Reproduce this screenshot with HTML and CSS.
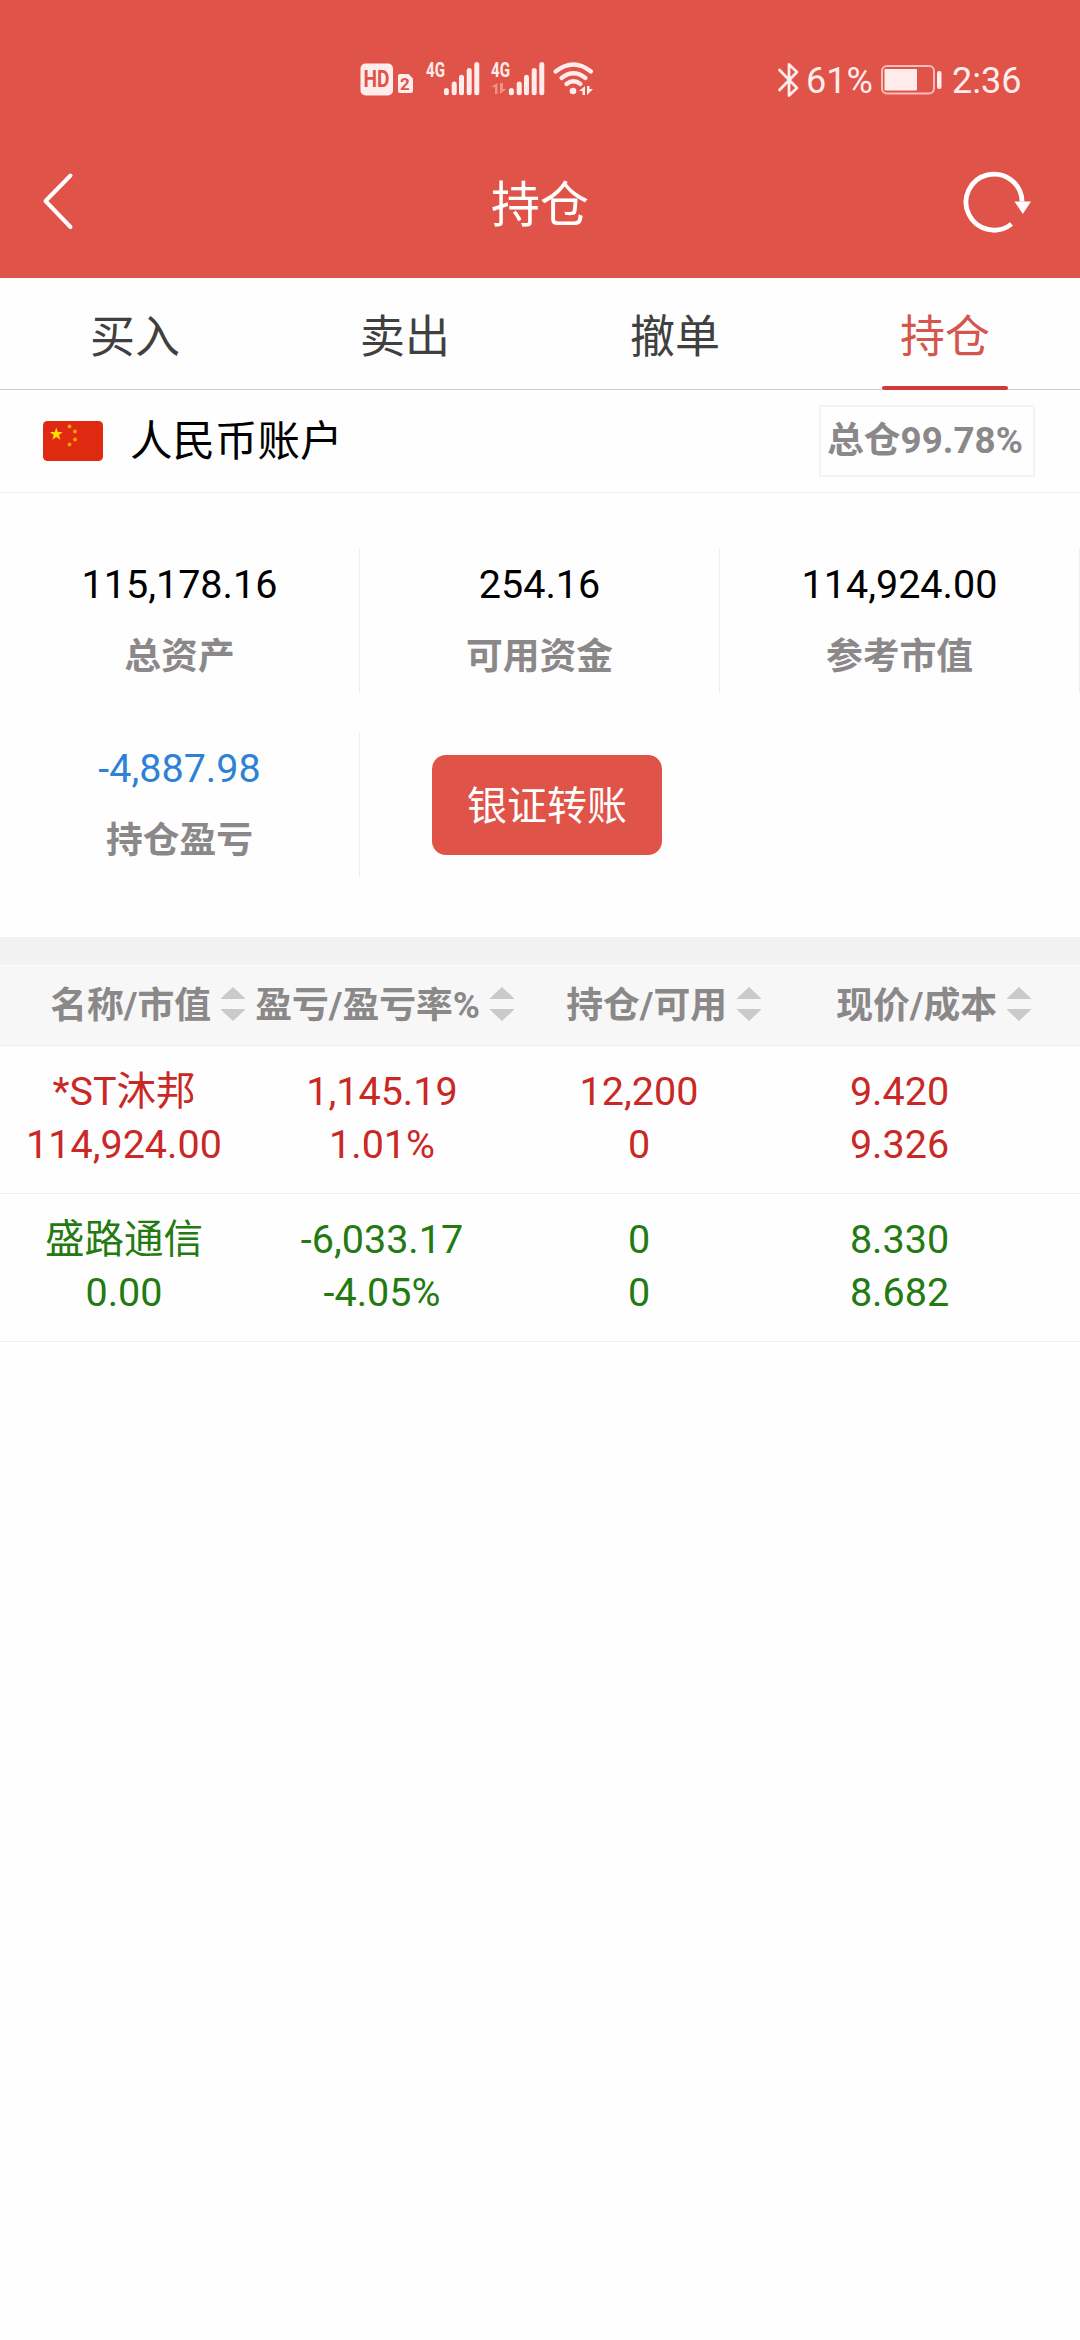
FILE: index.html
```html
<!DOCTYPE html>
<html lang="zh-CN">
<head>
<meta charset="utf-8">
<title>持仓</title>
<link rel="stylesheet" href="styles.css">
</head>
<body>
<header class="top">
  <div class="status">
    <svg class="status-signals" width="260" height="60" viewBox="0 0 260 60">
      <rect x="10.500" y="13.500" width="32.500" height="32" rx="5" fill="#ffeceb"/>
      <text class="hd" x="26.500" y="37" textLength="26" lengthAdjust="spacingAndGlyphs">HD</text>
      <path d="M50 24h8.500l4.500 4.500V41a2 2 0 0 1-2 2H50a2 2 0 0 1-2-2V26a2 2 0 0 1 2-2z" fill="#ffeceb"/>
      <text class="sim" x="55" y="39.500">2</text>
      <text class="net" x="76" y="27" textLength="19" lengthAdjust="spacingAndGlyphs">4G</text>
      <path class="bars" d="M96.400 40.500v2.200M104.200 34v8.700M111.500 27.200v15.500M119.200 20.500v22.200M126.800 14.500v28.200"/>
      <text class="net" x="141" y="27" textLength="19" lengthAdjust="spacingAndGlyphs">4G</text>
      <path d="M147.500 33v11h-2.500v-7h-4zM150 33v11l6.500-5h-3.500v-6z" fill="#f0918a"/>
      <path class="bars" d="M161.400 40.500v2.200M169.200 34v8.700M176.500 27.200v15.500M184.200 20.500v22.200M191.800 14.500v28.200"/>
      <path d="M205.500 21.500Q223.500 7.500 241 21.500M211.500 28Q223.500 18.500 235.500 28M216.500 34Q223.500 28.500 230.500 34" fill="none" stroke="#ffeceb" stroke-width="4.200" stroke-linecap="round"/>
      <circle cx="223" cy="41" r="3.300" fill="#ffeceb"/>
      <path d="M235 36v9h-2.500v-4h-3.500zM237 36v9l6-6h-3.500v-3z" fill="#ffeceb"/>
    </svg>
    <div class="status-right">
      <svg width="24" height="38" viewBox="0 0 24 38"><path d="M2.500 9L20 27 12 34.500V3.500L20 11 2.500 29" fill="none" stroke="#ffeceb" stroke-width="2.800" stroke-linejoin="round" stroke-linecap="round"/></svg>
      <span class="percent">61%</span>
      <svg class="battery" width="62" height="30" viewBox="0 0 62 30"><rect x="1" y="1" width="52" height="27.500" rx="5" fill="none" stroke="#f8bdb8" stroke-width="2"/><rect x="3.500" y="4" width="32.500" height="21.500" rx="1" fill="#ffeceb"/><rect x="56" y="6" width="4.500" height="18" rx="2.200" fill="#ffeceb"/></svg>
      <span class="clock">2:36</span>
    </div>
  </div>
  <div class="nav">
    <svg class="back" width="34" height="60" viewBox="0 0 34 60"><path d="M30.500 5.500L5.500 31 30.500 57" fill="none" stroke="#fff" stroke-width="4" stroke-linecap="round" stroke-linejoin="round"/></svg>
    <h1 class="title">持仓</h1>
    <svg class="refresh" width="70" height="64" viewBox="0 0 70 64"><path d="M49.500 54A28 28 0 1 1 60 31.500" fill="none" stroke="#fff" stroke-width="4.800"/><path d="M52.500 31.500h16.500L60.800 44z" fill="#fff"/></svg>
  </div>
</header>
<nav class="tabs">
  <span class="tab">买入</span>
  <span class="tab">卖出</span>
  <span class="tab">撤单</span>
  <span class="tab active">持仓</span>
</nav>
<section class="account">
  <svg class="flag" width="60" height="40" viewBox="0 0 60 40">
    <rect width="60" height="40" rx="4.500" fill="#df2910"/>
    <path d="M13.300 6.500l1.600 4.600h4.900l-3.900 2.900 1.500 4.700-4.100-2.800-4 2.800 1.400-4.700-3.900-2.900h4.900z" fill="#ffde00"/>
    <g fill="#f6a30a"><circle cx="26.500" cy="5.500" r="1.900"/><circle cx="32" cy="10.500" r="1.900"/><circle cx="32" cy="18.500" r="1.900"/><circle cx="26.500" cy="23.500" r="1.900"/></g>
  </svg>
  <span class="account-name">人民币账户</span>
  <span class="ratio">总仓99.78%</span>
</section>
<section class="summary">
  <div class="stat"><b>115,178.16</b><span>总资产</span></div>
  <div class="stat"><b>254.16</b><span>可用资金</span></div>
  <div class="stat"><b>114,924.00</b><span>参考市值</span></div>
  <div class="stat loss"><b>-4,887.98</b><span>持仓盈亏</span></div>
  <div class="action"><button class="transfer">银证转账</button></div>
</section>
<section class="holdings">
  <div class="head">
    <span class="col">名称/市值<i class="sort"></i></span>
    <span class="col">盈亏/盈亏率%<i class="sort"></i></span>
    <span class="col">持仓/可用<i class="sort"></i></span>
    <span class="col">现价/成本<i class="sort"></i></span>
  </div>
  <div class="row up">
    <div>*ST沐邦<br>114,924.00</div>
    <div>1,145.19<br>1.01%</div>
    <div>12,200<br>0</div>
    <div>9.420<br>9.326</div>
  </div>
  <div class="row down">
    <div>盛路通信<br>0.00</div>
    <div>-6,033.17<br>-4.05%</div>
    <div>0<br>0</div>
    <div>8.330<br>8.682</div>
  </div>
</section>
</body>
</html>
```
FILE: styles.css
```css
* { box-sizing: border-box; }
body {
  margin: 0;
  width: 1080px;
  min-height: 2340px;
  background: #fefefe;
  color: #000;
  font-family: Roboto, "Noto Sans CJK SC", sans-serif;
}
svg { display: block; flex: none; }

.top { height: 278px; background: #e05348; color: #fff; }
.status { display: flex; height: 110px; padding: 50px 59px 0 350px; justify-content: space-between; }
.status-right { display: flex; height: 60px; padding-top: 11px; color: #ffeceb; font-size: 36px; line-height: 41px; }
.percent { margin-left: 5px; width: 75px; }
.battery { margin-top: 4px; }
.clock { margin-left: 9px; width: 69px; }
.hd { font: 700 24px Roboto, sans-serif; text-anchor: middle; fill: #e05348; }
.sim { font: 700 17px Roboto, sans-serif; text-anchor: middle; fill: #e05348; }
.net { font: 700 20px Roboto, sans-serif; fill: #ffeceb; }
.bars { fill: none; stroke: #ffeceb; stroke-width: 5; stroke-linecap: round; }

.nav { display: flex; height: 168px; align-items: flex-start; justify-content: space-between; padding: 60px 48px 0 40px; }
.title { margin: 8px 0 0 44px; font-size: 49px; line-height: 56px; font-weight: 400; }

.tabs { display: flex; height: 112px; border-bottom: 1px solid #ccc; }
.tab { flex: 1; display: flex; justify-content: center; color: #404040; font-size: 45px; line-height: 120px; height: 112px; }
.active { color: #d4564d; }
.active::after { content: ""; align-self: flex-end; width: 126px; height: 4px; margin-left: -108px; margin-right: -18px; border-radius: 2px; background: #d03a3a; }

.account { display: flex; height: 103px; padding: 15px 45px 0 43px; border-bottom: 1px solid #f0f0f0; }
.flag { margin-top: 16px; }
.account-name { margin-left: 27px; font-size: 42.5px; line-height: 73px; }
.ratio { margin-left: auto; width: 216px; height: 72px; padding-left: 6px; border: 2px solid #f3f3f3; color: #8a8888; font-size: 36.8px; font-weight: 700; line-height: 67px; white-space: nowrap; }

.summary { display: grid; grid-template-columns: repeat(3, 360px); grid-auto-rows: 144px; row-gap: 40px; height: 444px; padding-top: 56px; }
.stat { border-right: 1px solid #efefef; text-align: center; }
.stat b, .stat span { display: block; }
.stat b { padding-top: 13px; font-size: 39.5px; font-weight: 400; line-height: 46px; }
.stat span { margin-top: 22px; color: #8a8888; font-size: 36.8px; font-weight: 700; line-height: 54px; }
.loss b { color: #2e82d6; }
.action { padding: 22px 0 0 72px; }
.transfer { display: block; width: 230px; height: 100px; padding: 3px 0 0; border: 0; border-radius: 14px; background: #e05348; color: #fff; font: inherit; font-size: 40px; line-height: 97px; }

.holdings { border-top: 28px solid #f2f2f2; padding-top: 1px; }
.head { display: grid; grid-template-columns: 245px 269px 247px 270px; height: 80px; border-bottom: 1px solid #f0f0f0; background: #f7f7f7; }
.col { display: flex; justify-content: flex-end; gap: 10px; color: #8a8888; font-size: 36.8px; font-weight: 700; line-height: 80px; white-space: nowrap; }
.sort { flex: none; width: 24px; height: 34px; margin-top: 21px; background: #cacaca; clip-path: polygon(50% 0, 100% 33%, 100% 35%, 0 35%, 0 33%, 50% 0, 0 65%, 100% 65%, 100% 67%, 50% 100%, 0 67%, 0 65%, 50% 0); }
.row { display: grid; grid-template-columns: 248px 268px 246px 275px; height: 148px; padding-top: 19px; border-bottom: 1px solid #f0f0f0; font-size: 39.5px; line-height: 53px; text-align: center; }
.up { color: #c92825; }
.down { color: #227a10; }
```
